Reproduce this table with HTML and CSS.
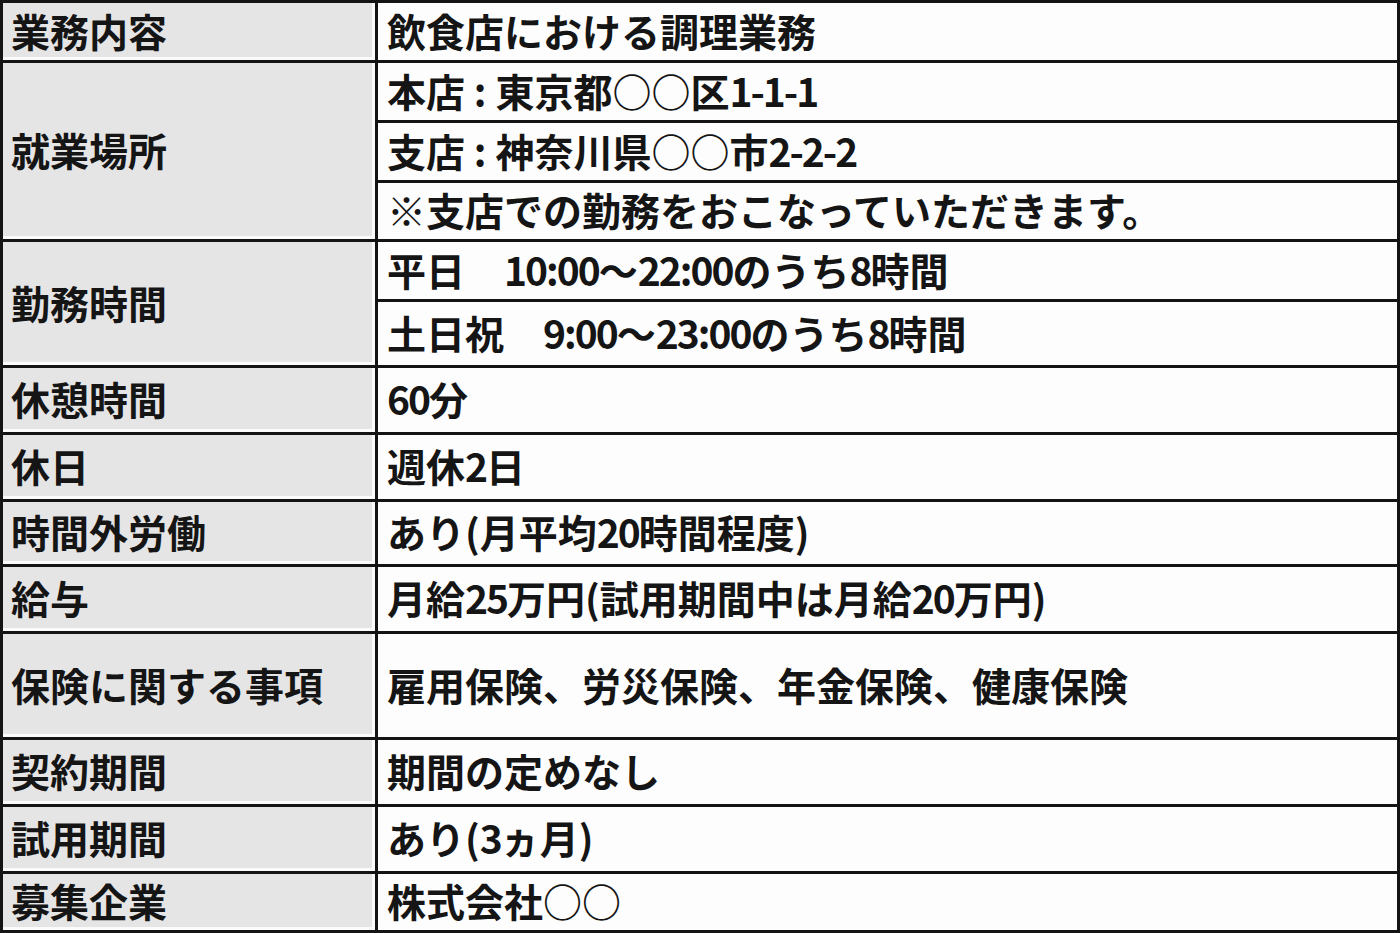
FILE: index.html
```html
<!DOCTYPE html>
<html lang="ja">
<head>
<meta charset="utf-8">
<title>募集要項</title>
<link rel="stylesheet" href="styles.css">
</head>
<body>
<div class="sheet">
  <div class="label span1">業務内容</div>
  <div class="value">飲食店における調理業務</div>

  <div class="label span3">就業場所</div>
  <div class="value">本店 : 東京都○○区<span class="num">1-1-1</span></div>
  <div class="value">支店 : 神奈川県○○市<span class="num">2-2-2</span></div>
  <div class="value">※支店での勤務をおこなっていただきます。</div>

  <div class="label span2">勤務時間</div>
  <div class="value">平日　<span class="num">10:00</span>～<span class="num">22:00</span>のうち<span class="num">8</span>時間</div>
  <div class="value">土日祝　<span class="num">9:00</span>～<span class="num">23:00</span>のうち<span class="num">8</span>時間</div>

  <div class="label span1">休憩時間</div>
  <div class="value"><span class="num">60</span>分</div>

  <div class="label span1">休日</div>
  <div class="value">週休<span class="num">2</span>日</div>

  <div class="label span1">時間外労働</div>
  <div class="value">あり(月平均<span class="num">20</span>時間程度)</div>

  <div class="label span1">給与</div>
  <div class="value">月給<span class="num">25</span>万円(試用期間中は月給<span class="num">20</span>万円)</div>

  <div class="label span1">保険に関する事項</div>
  <div class="value">雇用保険、労災保険、年金保険、健康保険</div>

  <div class="label span1">契約期間</div>
  <div class="value">期間の定めなし</div>

  <div class="label span1">試用期間</div>
  <div class="value">あり(<span class="num">3</span>ヵ月)</div>

  <div class="label span1">募集企業</div>
  <div class="value">株式会社○○</div>
</div>
</body>
</html>
```

FILE: styles.css
```css
html, body {
  margin: 0;
  padding: 0;
  background: #ffffff;
}

.sheet {
  width: 1400px;
  height: 933px;
  box-sizing: border-box;
  display: grid;
  grid-template-columns: 372px 1019px;
  grid-template-rows: 57px 57px 57px 56px 57px 63px 64px 64px 62px 64px 103px 64px 64px 56px;
  gap: 3px;
  padding: 3px;
  background: #141414;
  font-family: "Noto Sans CJK JP", "Noto Sans", sans-serif;
  font-weight: 700;
  font-size: 39px;
  line-height: 1;
  color: #151515;
}

.label {
  grid-column: 1;
  display: flex;
  align-items: center;
  padding: 0 0 3px 8px;
  background: #e6e5e6;
  box-shadow: inset -3px -3px 0 #fbfbfb;
}

.span1 { grid-row: span 1; }
.span2 { grid-row: span 2; }
.span3 { grid-row: span 3; }

.value {
  grid-column: 2;
  display: flex;
  align-items: center;
  padding: 0 0 3px 9px;
  background: #fdfdfd;
  white-space: nowrap;
}

.num {
  letter-spacing: -2px;
}
```
